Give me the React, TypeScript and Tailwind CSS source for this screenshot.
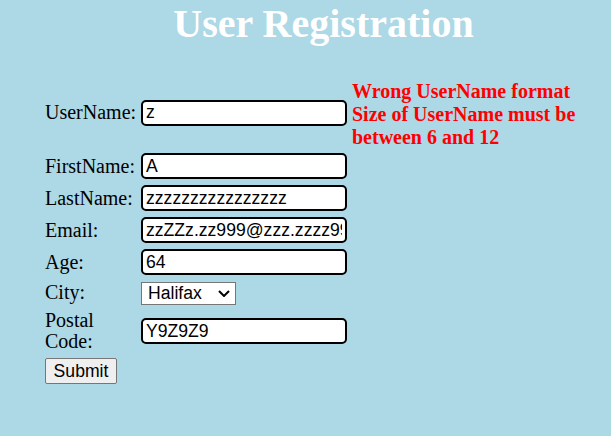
const serif = "font-['Liberation_Serif','Times_New_Roman',serif]";
const sans = "font-['Liberation_Sans',Arial,sans-serif]";

const fields = [
  { label: "FirstName:", value: "A" },
  { label: "LastName:", value: "zzzzzzzzzzzzzzzz" },
  { label: "Email:", value: "zzZZz.zz999@zzz.zzzz999.com" },
  { label: "Age:", value: "64" },
];

const inputCls = `h-[26px] w-[206px] rounded-[5px] border-2 border-black bg-white px-[3px] text-[17.6px] text-black outline-none ${sans}`;

const App = () => {
  return (
    <div className={`min-h-[436px] w-full bg-[#add8e6] pl-[36px] ${serif}`}>
      <h1 className="pt-[1px] text-center text-[40px] font-bold leading-[46px] text-white">
        User Registration
      </h1>

      <form className="mt-[31px] ml-[9px] grid grid-cols-[94px_206px_240px] items-center gap-x-[2px] gap-y-[6px] text-[20px] leading-[23px] text-black">
        <label>UserName:</label>
        <input className={inputCls} defaultValue="z" />
        <div className="ml-[3px] translate-y-[2px] font-bold text-[#ff0000]">
          <div>Wrong UserName format</div>
          <div>Size of UserName must be between 6 and 12</div>
        </div>

        {fields.map((f) => (
          <div key={f.label} className="contents">
            <label>{f.label}</label>
            <input className={inputCls} defaultValue={f.value} />
            <div />
          </div>
        ))}

        <label>City:</label>
        <div className="relative h-[23px] w-[95px]">
          <select
            className={`h-[23px] w-[95px] appearance-none border border-[#767676] bg-white pl-[6px] text-[17.6px] leading-[21px] text-black outline-none ${sans}`}
            defaultValue="Halifax"
          >
            <option>Halifax</option>
            <option>Toronto</option>
            <option>Montreal</option>
          </select>
          <svg
            className="pointer-events-none absolute left-[77px] top-[9px]"
            width="12"
            height="7"
            viewBox="0 0 12 7"
            fill="none"
          >
            <path d="M1 1l5 5 5-5" stroke="#000" strokeWidth="2" />
          </svg>
        </div>
        <div />

        <label className="w-[60px] leading-[21px]">Postal Code:</label>
        <input className={inputCls} defaultValue="Y9Z9Z9" />
        <div />

        <div className="col-span-3">
          <button
            type="button"
            className={`h-[26px] w-[72px] rounded-[2px] border border-[#767676] bg-[#efefef] text-[17.6px] text-black ${sans}`}
          >
            Submit
          </button>
        </div>
      </form>
    </div>
  );
};

export default App;
